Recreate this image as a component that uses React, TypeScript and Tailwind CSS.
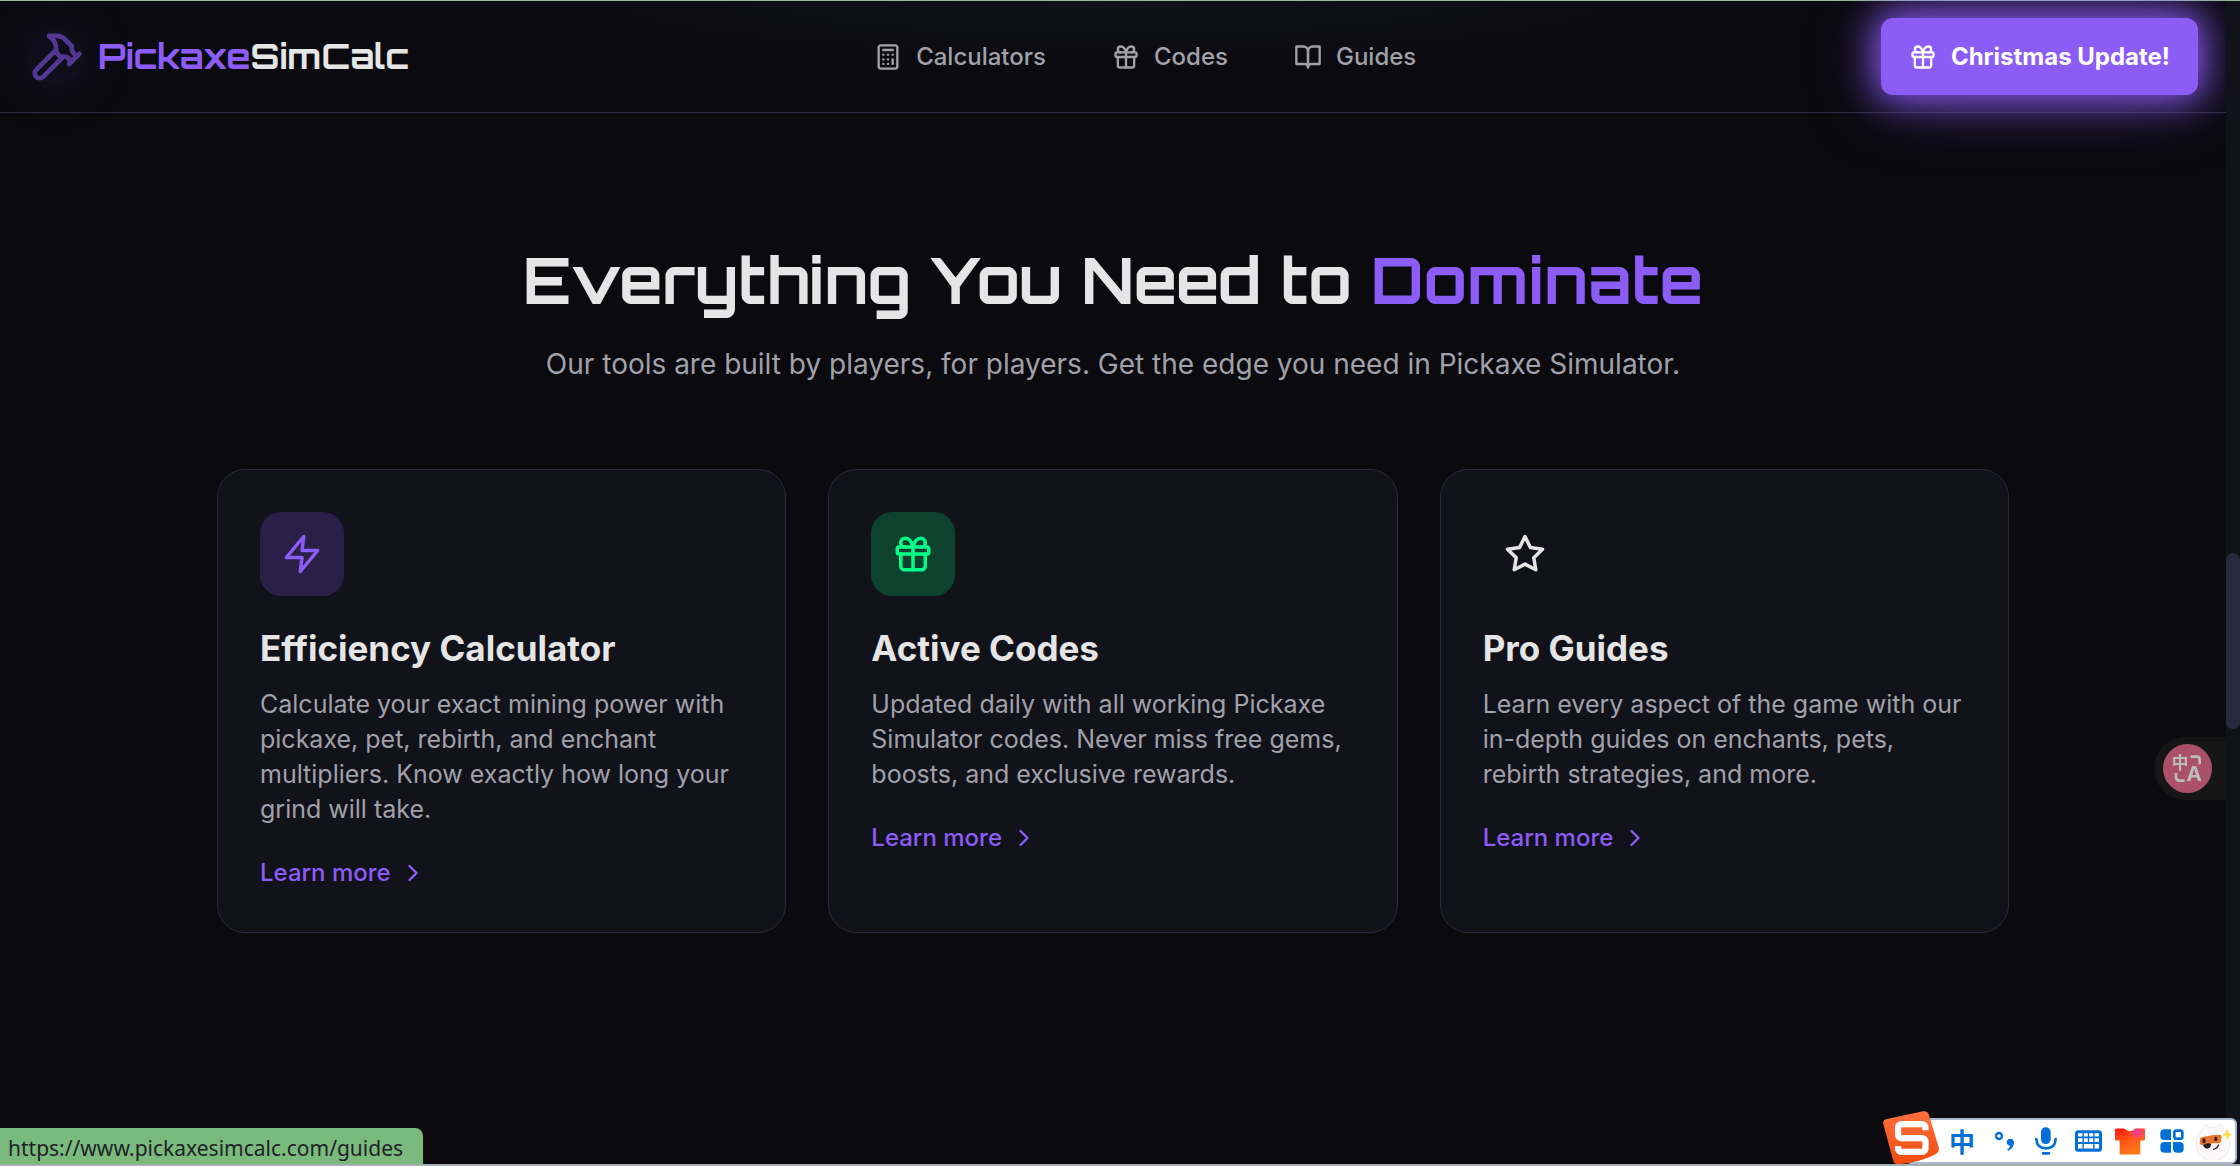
import * as React from "react";
import { Calculator, ChevronRight } from "lucide-react";

interface IconProps {
  size: number;
  className?: string;
}

type IconComponent = React.ComponentType<IconProps>;

interface NavItem {
  label: string;
  href: string;
  icon: IconComponent;
}

interface Feature {
  title: string;
  description: string;
  href: string;
  icon: IconComponent;
  tileClass: string;
}

const Icon = ({
  size,
  className,
  children,
}: IconProps & { children: React.ReactNode }) => (
  <svg
    width={size}
    height={size}
    viewBox="0 0 24 24"
    fill="none"
    stroke="currentColor"
    strokeWidth="2"
    strokeLinecap="round"
    strokeLinejoin="round"
    className={className}
    aria-hidden="true"
  >
    {children}
  </svg>
);

const HammerIcon = (props: IconProps) => (
  <Icon {...props}>
    <path d="m15 12-8.500 8.500c-.83.83-2.170.83-3 0a2.120 2.120 0 0 1 0-3L12 9" />
    <path d="M17.640 15 22 10.640" />
    <path d="m20.910 11.700-1.250-1.250c-.6-.6-.93-1.400-.93-2.250v-.86L16.010 4.600a5.560 5.560 0 0 0-3.940-1.640H9l.92.82A6.180 6.180 0 0 1 12 8.400v1.560l2 2h2.470l2.260 1.910" />
  </Icon>
);

const GiftIcon = (props: IconProps) => (
  <Icon {...props}>
    <rect x="3" y="8" width="18" height="4" rx="1" />
    <path d="M12 8v13" />
    <path d="M19 12v7a2 2 0 0 1-2 2H7a2 2 0 0 1-2-2v-7" />
    <path d="M7.500 8a2.500 2.500 0 0 1 0-5A4.800 8 0 0 1 12 8a4.800 8 0 0 1 4.500-5 2.500 2.500 0 0 1 0 5" />
  </Icon>
);

const BookIcon = (props: IconProps) => (
  <Icon {...props}>
    <path d="M2 3h6a4 4 0 0 1 4 4v14a3 3 0 0 0-3-3H2z" />
    <path d="M22 3h-6a4 4 0 0 0-4 4v14a3 3 0 0 1 3-3h7z" />
  </Icon>
);

const BoltIcon = (props: IconProps) => (
  <Icon {...props}>
    <polygon points="13 2 3 14 12 14 11 22 21 10 12 10 13 2" />
  </Icon>
);

const StarIcon = (props: IconProps) => (
  <Icon {...props}>
    <polygon points="12 2 15.090 8.260 22 9.270 17 14.140 18.180 21.020 12 17.770 5.820 21.020 7 14.140 2 9.270 8.910 8.260 12 2" />
  </Icon>
);

const navItems: NavItem[] = [
  { label: "Calculators", href: "#calculators", icon: Calculator },
  { label: "Codes", href: "#codes", icon: GiftIcon },
  { label: "Guides", href: "#guides", icon: BookIcon },
];

const features: Feature[] = [
  {
    title: "Efficiency Calculator",
    description:
      "Calculate your exact mining power with pickaxe, pet, rebirth, and enchant multipliers. Know exactly how long your grind will take.",
    href: "#calculators",
    icon: BoltIcon,
    tileClass: "bg-[#2a1f47] text-[#8b5cf6]",
  },
  {
    title: "Active Codes",
    description:
      "Updated daily with all working Pickaxe Simulator codes. Never miss free gems, boosts, and exclusive rewards.",
    href: "#codes",
    icon: GiftIcon,
    tileClass: "bg-[#0f412f] text-[#00ff88]",
  },
  {
    title: "Pro Guides",
    description:
      "Learn every aspect of the game with our in-depth guides on enchants, pets, rebirth strategies, and more.",
    href: "#guides",
    icon: StarIcon,
    tileClass: "text-[#e5e5e5]",
  },
];

const Header = () => (
  <header className="flex h-28 items-center justify-between border-b border-[#2a2a3e] bg-[radial-gradient(ellipse_at_top,#11121a_0%,#0a0a0f_45%)] px-7">
    <a href="#home" className="flex items-center gap-3.5">
      <span className="rounded-full bg-[#8b5cf6]/5 shadow-[0_0_50px_20px_rgba(139,92,246,0.06)]">
        <HammerIcon size={56} className="text-[#8b5cf6] opacity-55" />
      </span>
      <span className="font-['Orbitron',sans-serif] text-[35px] leading-[49px] font-bold">
        <span className="text-[#8b5cf6]">Pickaxe</span>
        <span>SimCalc</span>
      </span>
    </a>
    <nav className="flex items-center gap-[66px]">
      {navItems.map(({ label, href, icon: NavIcon }) => (
        <a
          key={label}
          href={href}
          className="flex items-center gap-3.5 text-2xl font-medium text-[#a1a1aa]"
        >
          <NavIcon size={28} />
          {label}
        </a>
      ))}
    </nav>
    <button
      type="button"
      className="flex h-[77px] items-center gap-3.5 rounded-xl bg-[#8b5cf6] px-7 text-2xl font-bold text-white shadow-[0_0_35px_4px_rgba(139,92,246,0.95),0_0_70px_rgba(139,92,246,0.5)]"
    >
      <GiftIcon size={28} />
      Christmas Update!
    </button>
  </header>
);

const FeatureCard = ({ feature }: { feature: Feature }) => {
  const FeatureIcon = feature.icon;

  return (
    <article className="flex flex-col items-start rounded-[28px] border border-[#2a2a3e] bg-[#12121a] p-[42px]">
      <div
        className={`flex size-21 items-center justify-center rounded-[21px] ${feature.tileClass}`}
      >
        <FeatureIcon size={42} />
      </div>
      <h3 className="mt-7 text-[35px] leading-[49px] font-bold">
        {feature.title}
      </h3>
      <p className="mt-3.5 text-[25px] leading-[35px] text-[#a1a1aa]">
        {feature.description}
      </p>
      <a
        href={feature.href}
        className="mt-7 flex items-center gap-2 text-2xl leading-[35px] font-medium text-[#8b5cf6]"
      >
        Learn more
        <ChevronRight size={28} />
      </a>
    </article>
  );
};

const PageScrollbar = () => (
  <div className="relative w-3.5 shrink-0 bg-[#12121a]">
    <div className="absolute inset-x-0 top-[552px] h-44 rounded-full bg-[#2a2a3e]" />
  </div>
);

const TranslateButton = () => (
  <button
    type="button"
    aria-label="Translate"
    className="fixed top-[737px] right-3.5 flex h-[63px] w-[72px] items-center rounded-l-full bg-[#161616] pl-[9px]"
  >
    <svg width="49" height="49" viewBox="0 0 147 147" fill="none">
      <circle cx="73.500" cy="73.500" r="73.500" fill="#aa5068" />
      <text
        x="51"
        y="75"
        textAnchor="middle"
        fontSize="50"
        fontWeight="700"
        fill="#bcbcbc"
        fontFamily="Noto Sans CJK SC, sans-serif"
      >
        中
      </text>
      <text
        x="94"
        y="112"
        textAnchor="middle"
        fontSize="62"
        fontWeight="700"
        fill="#bcbcbc"
        fontFamily="Inter, sans-serif"
      >
        A
      </text>
      <path
        d="M83 38h18q9 0 9 9v14M39 87v12q0 11 11 11h15"
        stroke="#bcbcbc"
        strokeWidth="8"
      />
    </svg>
  </button>
);

const imeButton = "flex h-full w-[42px] items-center justify-center";

const InputMethodBar = () => (
  <div className="fixed right-[3px] bottom-0.5 flex h-[46px] rounded-md border-2 border-[#a9b9d0] bg-white pl-[34px] text-[#0070d8]">
    <svg
      width="56"
      height="54"
      viewBox="0 0 168 162"
      className="absolute -top-[9px] -left-[24px] overflow-visible"
    >
      <defs>
        <linearGradient id="ime-logo" x1="0" y1="0" x2="0" y2="1">
          <stop offset="0" stopColor="#ff7040" />
          <stop offset="1" stopColor="#f04a0c" />
        </linearGradient>
      </defs>
      <path
        d="M12 24 120 1q13-3 17 9l30 98q4 16-12 23-50 25-110 29-12 0-15-13L1 39q-3-12 11-15Z"
        fill="url(#ime-logo)"
      />
      <text
        x="86"
        y="132"
        textAnchor="middle"
        fontSize="140"
        fontWeight="700"
        fill="#ffffff"
        fontFamily="Orbitron, DejaVu Sans, sans-serif"
      >
        S
      </text>
    </svg>
    <button type="button" className={imeButton}>
      <span className="font-['Noto_Sans_CJK_SC',sans-serif] text-[26px] leading-8 font-bold">
        中
      </span>
    </button>
    <button type="button" aria-label="Punctuation" className={imeButton}>
      <svg width="22" height="22" viewBox="0 0 66 66" fill="none">
        <circle cx="18" cy="18" r="9" stroke="currentColor" strokeWidth="7" />
        <path
          d="M52 26c8 0 11 6 11 12 0 11-8 20-18 24l-2-4c5-3 8-7 8-11-6 0-10-4-10-10s5-11 11-11Z"
          fill="currentColor"
        />
      </svg>
    </button>
    <button type="button" aria-label="Voice input" className={imeButton}>
      <svg width="22" height="28" viewBox="0 0 66 84" fill="none">
        <rect x="18" y="1" width="29" height="50" rx="14" fill="currentColor" />
        <path
          d="M4 36c1 18 12 28 29 28s28-10 29-28M24 79h18"
          stroke="currentColor"
          strokeWidth="8"
          strokeLinecap="round"
        />
      </svg>
    </button>
    <button type="button" aria-label="Keyboard" className={imeButton}>
      <svg width="27" height="22" viewBox="0 0 80 64" fill="none">
        <rect width="80" height="64" rx="10" fill="currentColor" />
        <path
          d="M9 9h13v10H9ZM26 9h12v10H26ZM42 9h12v10H42ZM58 9h13v10H58ZM9 24h13v11H9ZM26 24h12v11H26ZM42 24h12v11H42ZM58 24h13v11H58ZM9 41h13v13H9ZM26 41h28v13H26ZM58 41h13v13H58Z"
          fill="#ffffff"
        />
      </svg>
    </button>
    <button type="button" aria-label="Skins" className={imeButton}>
      <svg width="30" height="27" viewBox="0 0 90 80">
        <defs>
          <radialGradient id="skin-pink" cx="0.75" cy="0.15" r="0.3">
            <stop offset="0" stopColor="#f23da8" />
            <stop offset="1" stopColor="#f23da8" stopOpacity="0" />
          </radialGradient>
          <linearGradient id="skin-base" x1="0" y1="0" x2="0.5" y2="1">
            <stop offset="0" stopColor="#ff1010" />
            <stop offset="0.5" stopColor="#ff5516" />
            <stop offset="1" stopColor="#ff7a18" />
          </linearGradient>
        </defs>
        {["url(#skin-base)", "url(#skin-pink)"].map((fill) => (
          <path
            key={fill}
            d="M4 1h24q17 16 34 0h24q4 0 4 4v29q0 3-3 3H76v39q0 3-3 3H17q-3 0-3-3V37H3q-3 0-3-3V5q0-4 4-4Z"
            fill={fill}
          />
        ))}
      </svg>
    </button>
    <button type="button" aria-label="Toolbox" className={imeButton}>
      <svg width="24" height="24" viewBox="0 0 72 72" fill="none">
        <path
          d="M13 1h20v32H13Q1 33 1 21v-8Q1 1 13 1ZM13 39h20v32H13Q1 71 1 59v-8q0-12 12-12ZM39 39h20q12 0 12 12v8q0 12-12 12h-8q-12 0-12-12Z"
          fill="currentColor"
        />
        <rect
          x="43"
          y="5"
          width="24"
          height="24"
          rx="6"
          stroke="currentColor"
          strokeWidth="8"
        />
      </svg>
    </button>
    <button type="button" aria-label="Assistant" className={imeButton}>
      <svg width="38" height="38" viewBox="0 0 114 114">
        <path
          d="M14 34 28 10q4-6 11 1l6 5h18l9-9q5-4 9 3l12 24a51 51 0 1 1-79 0Z"
          fill="#faf8f9"
          stroke="#eadfe3"
          strokeWidth="2"
        />
        <path
          d="M16 47q32-9 57-9 7 0 7 8l-2 11q-2 7-9 7H53l-28 6q-9 1-11-8Z"
          fill="#e8732c"
        />
        <ellipse cx="27" cy="56" rx="5" ry="8" fill="#3a2013" />
        <ellipse cx="62" cy="51" rx="5" ry="7" fill="#3a2013" />
        <path d="M24 69q14-8 25-3-2 14-13 14-9-1-12-11Z" fill="#222222" />
        <path d="M54 82q14-2 17-14" stroke="#222222" strokeWidth="4" fill="none" />
        <path
          d="M97 20q3 15 15 18-12 3-15 18-3-15-15-18 12-3 15-18Z"
          fill="#ffe04a"
        />
      </svg>
    </button>
  </div>
);

export default function App() {
  return (
    <div className="flex min-h-screen border-t border-[#9db8a0] bg-[#0a0a0f] font-['Inter',sans-serif] text-[#e5e5e5]">
      <div className="min-w-0 flex-1">
        <Header />
        <main className="mx-auto max-w-[1792px] pt-33 pb-24">
          <div className="text-center">
            <h2 className="font-['Orbitron',sans-serif] text-[63px] leading-[70px] font-bold">
              Everything You Need to{" "}
              <span className="text-[#8b5cf6]">Dominate</span>
            </h2>
            <p className="mt-7 text-[28px] leading-[42px] text-[#a1a1aa]">
              Our tools are built by players, for players. Get the edge you need
              in Pickaxe Simulator.
            </p>
          </div>
          <div className="mt-21 grid grid-cols-3 gap-[42px]">
            {features.map((feature) => (
              <FeatureCard key={feature.title} feature={feature} />
            ))}
          </div>
        </main>
      </div>
      <PageScrollbar />
      <TranslateButton />
      <InputMethodBar />
      <div className="fixed bottom-0.5 left-0 rounded-tr-lg bg-[#7aba7c] pt-1 pr-5 pl-2 font-['Noto_Sans',sans-serif] text-[21px] leading-8 text-[#1f2328]">
        https://www.pickaxesimcalc.com/guides
      </div>
      <div className="fixed inset-x-0 bottom-0 h-0.5 bg-[#a5b0b5]" />
    </div>
  );
}
